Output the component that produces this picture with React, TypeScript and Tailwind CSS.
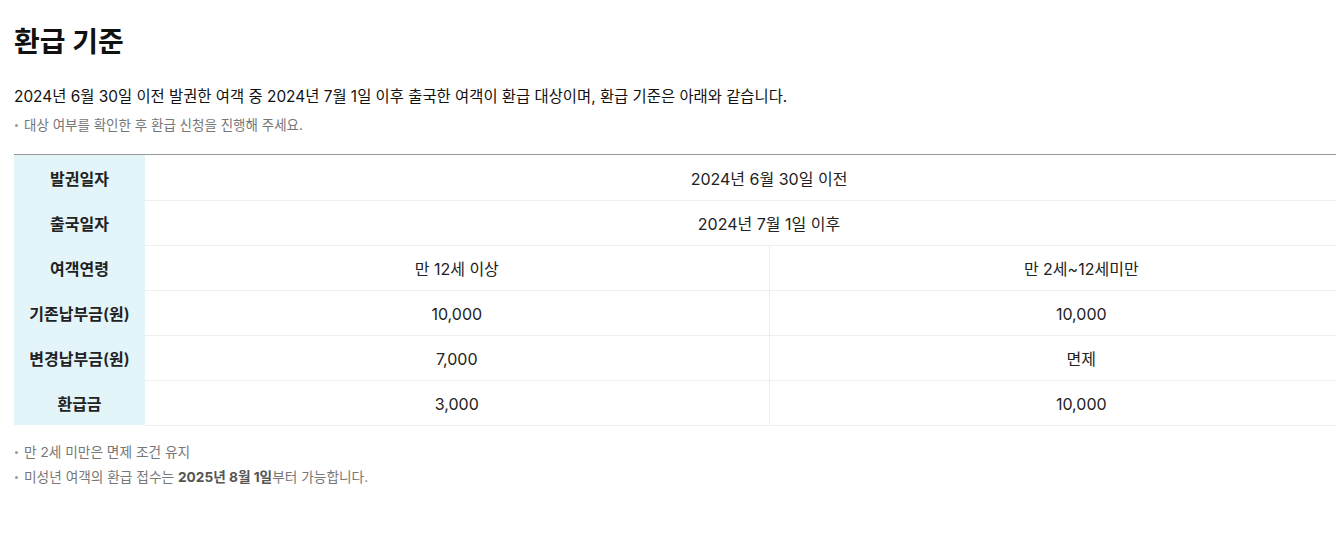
import React from 'react';

const font = { fontFamily: 'Inter, "Noto Sans CJK KR", sans-serif' };

type Row = { label: string; cells: string[] };

const rows: Row[] = [
  { label: '발권일자', cells: ['2024년 6월 30일 이전'] },
  { label: '출국일자', cells: ['2024년 7월 1일 이후'] },
  { label: '여객연령', cells: ['만 12세 이상', '만 2세~12세미만'] },
  { label: '기존납부금(원)', cells: ['10,000', '10,000'] },
  { label: '변경납부금(원)', cells: ['7,000', '면제'] },
  { label: '환급금', cells: ['3,000', '10,000'] },
];

const Bullet: React.FC<{ children: React.ReactNode }> = ({ children }) => (
  <li className="flex items-center text-[13.7px] leading-[25px] text-[#777]">
    <span className="w-[3px] h-[3px] bg-[#999] rounded-full mr-[6px] ml-[1px]" />
    <span>{children}</span>
  </li>
);

export default function App() {
  return (
    <div className="w-full bg-white text-[#111] overflow-hidden" style={font}>
      <div className="pl-[14px] pr-[1px] pt-[23px] pb-10">
        <h2 className="text-[28px] leading-[39px] font-bold">환급 기준</h2>
        <p className="mt-[23px] text-[15.4px] leading-[24px] text-[#111]">
          2024년 6월 30일 이전 발권한 여객 중 2024년 7월 1일 이후 출국한 여객이 환급 대상이며, 환급 기준은 아래와 같습니다.
        </p>
        <ul className="mt-[6px]">
          <li className="flex items-center text-[13.5px] leading-[20px] text-[#777]">
            <span className="w-[3px] h-[3px] bg-[#999] rounded-full mr-[6px] ml-[1px]" />
            <span>대상 여부를 확인한 후 환급 신청을 진행해 주세요.</span>
          </li>
        </ul>

        <div className="mt-[19px] overflow-hidden border-t border-[#999]">
          <table className="w-[1379px] table-fixed border-collapse">
            <colgroup>
              <col className="w-[131px]" />
              <col className="w-[624px]" />
              <col className="w-[624px]" />
            </colgroup>
            <tbody>
              {rows.map((r) => (
                <tr key={r.label} className="h-[45px]">
                  <th className="bg-[#e3f5f8] text-[16px] font-semibold text-[#222] pt-[3px] pb-0 px-0">
                    {r.label}
                  </th>
                  {r.cells.length === 1 ? (
                    <td
                      colSpan={2}
                      className="text-center text-[16px] text-[#222] border-b border-[#eee] pt-[3px] pb-0 px-0"
                    >
                      {r.cells[0]}
                    </td>
                  ) : (
                    r.cells.map((c, i) => (
                      <td
                        key={i}
                        className={
                          i === 0
                            ? 'text-center text-[16px] text-[#222] border-b border-r border-[#eee] pt-[3px] pb-0 px-0'
                            : 'text-center text-[16px] text-[#222] border-b border-[#eee] pt-[3px] pb-0 px-0'
                        }
                      >
                        {c}
                      </td>
                    ))
                  )}
                </tr>
              ))}
            </tbody>
          </table>
        </div>

        <ul className="mt-[14px]">
          <Bullet>만 2세 미만은 면제 조건 유지</Bullet>
          <Bullet>
            미성년 여객의 환급 접수는 <b className="font-bold text-[#555]">2025년 8월 1일</b>부터 가능합니다.
          </Bullet>
        </ul>
      </div>
    </div>
  );
}
